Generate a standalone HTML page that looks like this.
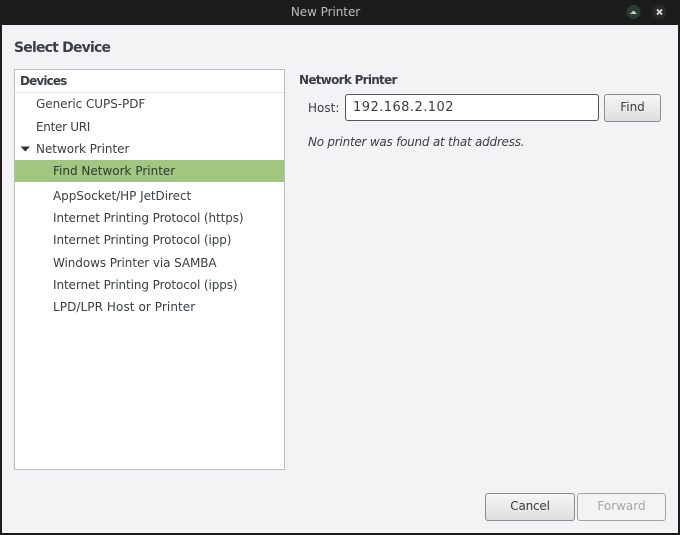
<!DOCTYPE html>
<html><head><meta charset="utf-8"><style>
html,body{margin:0;padding:0;width:680px;height:535px;overflow:hidden;background:#1c1c1c}
body{position:relative;font-family:"DejaVu Sans","Liberation Sans",sans-serif;font-size:12px;color:#3a3e42}
.t{position:absolute;white-space:nowrap;line-height:16px;height:16px}
.b{position:absolute;box-sizing:border-box;border:1px solid #8a8c8e;border-radius:3px;text-align:center}
</style></head><body>
<div style="position:absolute;left:2px;top:25px;width:676px;height:508px;background:#f3f3f5"></div>
<div class="t" style="left:0;width:651px;top:4px;text-align:center;color:#bdbdbd;font-size:12px;letter-spacing:-.05px">New Printer</div>
<svg style="position:absolute;left:624px;top:2px" width="50" height="20">
<circle cx="9.500" cy="10" r="7" fill="#2b3d2c"/><path d="M6 12L9.500 8.500l3.500 3.500z" fill="#c4d2c0"/>
<circle cx="35.500" cy="10" r="7" fill="#2a2a2a"/><path d="M33 7.500l5 5M38 7.500l-5 5" stroke="#cfcfcf" stroke-width="2"/>
</svg>
<div class="t" style="left:14px;top:40px;font-size:14px;font-weight:bold;letter-spacing:-.8px">Select Device</div>

<div style="position:absolute;left:14px;top:69px;width:271px;height:401px;box-sizing:border-box;background:#fff;border:1px solid #bcbdbe"></div>
<div style="position:absolute;left:15px;top:92px;width:269px;height:1px;background:#e6e6e6"></div>
<div style="position:absolute;left:15px;top:160px;width:269px;height:22px;background:#a0c67f"></div>
<div class="t" style="left:20px;top:73px;font-weight:bold;letter-spacing:-.85px">Devices</div>
<div class="t" style="left:36px;top:96px;letter-spacing:-.05px">Generic CUPS-PDF</div>
<div class="t" style="left:36px;top:119px;letter-spacing:-.3px">Enter URI</div>
<svg style="position:absolute;left:20px;top:145px" width="11" height="8"><path d="M0.500 1.500H10L5.300 6.500z" fill="#2e3236"/></svg>
<div class="t" style="left:36px;top:141px;letter-spacing:-.03px">Network Printer</div>
<div class="t" style="left:53px;top:163px;letter-spacing:0;color:#33383a">Find Network Printer</div>
<div class="t" style="left:53px;top:188px;letter-spacing:-.05px">AppSocket/HP JetDirect</div>
<div class="t" style="left:53px;top:210px;letter-spacing:-.1px">Internet Printing Protocol (https)</div>
<div class="t" style="left:53px;top:232px;letter-spacing:-.1px">Internet Printing Protocol (ipp)</div>
<div class="t" style="left:53px;top:255px;letter-spacing:-.08px">Windows Printer via SAMBA</div>
<div class="t" style="left:53px;top:277px;letter-spacing:-.1px">Internet Printing Protocol (ipps)</div>
<div class="t" style="left:53px;top:299px;letter-spacing:.08px">LPD/LPR Host or Printer</div>

<div class="t" style="left:299px;top:72px;font-weight:bold;letter-spacing:-.72px">Network Printer</div>
<div class="t" style="left:308px;top:100px;letter-spacing:0">Host:</div>
<div style="position:absolute;left:345px;top:94px;width:254px;height:27px;box-sizing:border-box;background:#fff;border:1px solid #55585a;border-radius:3px"></div>
<div class="t" style="left:353px;top:100px;font-size:13px;letter-spacing:.45px">192.168.2.102</div>
<div class="b" style="left:604px;top:94px;width:57px;height:28px;line-height:25px;background:linear-gradient(#f6f6f6,#dededf)">Find</div>
<div class="t" style="left:308px;top:134px;font-style:italic;letter-spacing:-.24px">No printer was found at that address.</div>

<div class="b" style="left:485px;top:493px;width:90px;height:28px;line-height:25px;background:linear-gradient(#f6f6f6,#dededf);letter-spacing:-.2px">Cancel</div>
<div class="b" style="left:577px;top:493px;width:89px;height:28px;line-height:25px;background:#f3f3f5;color:#a4a6a8;border-color:#a2a4a6">Forward</div>
</body></html>
